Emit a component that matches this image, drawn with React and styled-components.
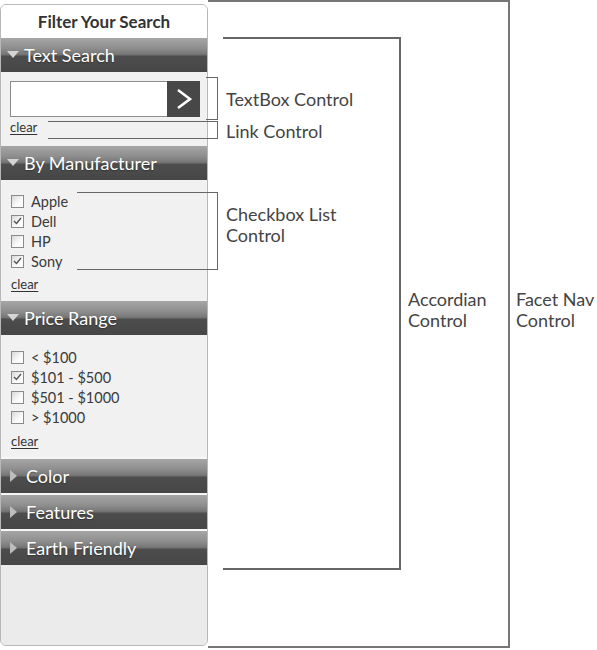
import React from "react";
import styled, { createGlobalStyle } from "styled-components";

const Global = createGlobalStyle`
  html, body { margin: 0; padding: 0; background: #fff; }
  body { font-family: Lato, "Open Sans", sans-serif; color: #3a3a3a; }
`;

const Page = styled.div`
  position: relative;
  display: flex;
  align-items: flex-start;
  width: 597px;
  height: 650px;
`;

const Panel = styled.div`
  box-sizing: border-box;
  width: 208px;
  height: 642px;
  margin-top: 4px;
  border: 1px solid #b8b8b8;
  border-radius: 6px;
  background: #ebebeb;
  overflow: hidden;
  display: flex;
  flex-direction: column;
`;

const Title = styled.div`
  height: 33px;
  background: #fff;
  display: flex;
  align-items: center;
  justify-content: center;
  font-size: 17px;
  font-weight: 700;
  color: #333;
  flex-shrink: 0;
`;

const Header = styled.div`
  height: 34px;
  flex-shrink: 0;
  border-top: ${(p) => (p.$collapsed ? "2px solid #f6f6f6" : "0")};
  display: flex;
  align-items: center;
  gap: ${(p) => (p.$collapsed ? 9 : 5)}px;
  padding-left: ${(p) => (p.$collapsed ? 9 : 6)}px;
  color: #fff;
  font-size: 18px;
  background: linear-gradient(
    to bottom,
    #a6a6a6 0%,
    #8e8e8e 30%,
    #767676 48%,
    #4d4d4d 54%,
    #464646 100%
  );
  text-shadow: 0 1px 1px rgba(0, 0, 0, 0.3);
`;

const Body = styled.div`
  background: #f1f1f1;
  padding: ${(p) => p.$pad};
  flex-shrink: 0;
`;

const SearchRow = styled.div`
  display: flex;
  width: 190px;
  height: 36px;
`;

const SearchInput = styled.div`
  flex: 1;
  background: #fff;
  border: 1px solid #8c8c8c;
  border-right: 0;
`;

const SearchButton = styled.div`
  width: 33px;
  background: #474747;
  display: flex;
  align-items: center;
  justify-content: center;
`;

const Clear = styled.a`
  display: block;
  margin-top: ${(p) => p.$mt}px;
  font-size: 13px;
  line-height: 15px;
  color: #333;
  text-decoration: underline;
  text-underline-offset: 2px;
`;

const List = styled.div`
  display: flex;
  flex-direction: column;
`;

const Item = styled.div`
  display: flex;
  align-items: center;
  height: 20px;
  gap: 7px;
  font-size: 14.5px;
  color: #3a3a3a;
`;

const Box = styled.span`
  box-sizing: border-box;
  width: 13px;
  height: 13px;
  border: 1px solid #8a8a8a;
  background: linear-gradient(135deg, #d8d8d8 0%, #fafafa 60%, #fff 100%);
  display: flex;
  align-items: center;
  justify-content: center;
`;

const Rest = styled.div`
  flex: 1;
  background: #ebebeb;
`;

const FacetBox = styled.div`
  box-sizing: border-box;
  width: 302px;
  height: 648px;
  border-top: 2px solid #767676;
  border-right: 2px solid #767676;
  border-bottom: 2px solid #767676;
  display: flex;
  align-items: flex-start;
  padding-top: 35px;
  padding-left: 15px;
`;

const Bracket = styled.div`
  box-sizing: border-box;
  width: ${(p) => p.$w}px;
  height: ${(p) => p.$h}px;
  border-top: ${(p) => p.$bw}px solid #666;
  border-right: ${(p) => p.$bw}px solid #666;
  border-bottom: ${(p) => p.$bw}px solid #666;
  flex-shrink: 0;
`;

const Label = styled.div`
  margin-top: ${(p) => p.$mt}px;
  margin-left: ${(p) => p.$ml}px;
  font-size: 18px;
  line-height: 21px;
  color: #444;
  white-space: nowrap;
`;

const Callout = styled.div`
  position: absolute;
  top: ${(p) => p.$top}px;
  left: ${(p) => p.$left}px;
  display: flex;
  align-items: flex-start;
`;

const DownArrow = () => (
  <svg width="12" height="8" viewBox="0 0 12 8">
    <polygon points="0,0 12,0 6,7" fill="#d4d4d4" />
  </svg>
);

const RightArrow = () => (
  <svg width="7" height="12" viewBox="0 0 7 12">
    <polygon points="0,0 7,6 0,12" fill="#bdbdbd" />
  </svg>
);

const Check = ({ on }) => (
  <Box>
    {on && (
      <svg width="9" height="8" viewBox="0 0 9 8">
        <polyline points="1,4 3.5,6.5 8,1" fill="none" stroke="#555" strokeWidth="1.4" />
      </svg>
    )}
  </Box>
);

const Section = ({ title, children }) => (
  <>
    <Header>
      <DownArrow />
      {title}
    </Header>
    {children}
  </>
);

const CheckList = ({ items }) => (
  <List>
    {items.map(([label, on]) => (
      <Item key={label}>
        <Check on={on} />
        {label}
      </Item>
    ))}
  </List>
);

export default function App() {
  return (
    <>
      <Global />
      <Page>
        <Panel>
          <Title>Filter Your Search</Title>
          <Section title="Text Search">
            <Body $pad="9px 8px 11px 9px">
              <SearchRow>
                <SearchInput />
                <SearchButton>
                  <svg width="16" height="22" viewBox="0 0 16 22">
                    <polyline points="2,2 14,11 2,20" fill="none" stroke="#fff" strokeWidth="2.6" />
                  </svg>
                </SearchButton>
              </SearchRow>
              <Clear $mt={3}>clear</Clear>
            </Body>
          </Section>
          <Section title="By Manufacturer">
            <Body $pad="11px 8px 9px 10px">
              <CheckList items={[["Apple", false], ["Dell", true], ["HP", false], ["Sony", true]]} />
              <Clear $mt={6}>clear</Clear>
            </Body>
          </Section>
          <Section title="Price Range">
            <Body $pad="12px 8px 8px 10px">
              <CheckList
                items={[["< $100", false], ["$101 - $500", true], ["$501 - $1000", false], ["> $1000", false]]}
              />
              <Clear $mt={7}>clear</Clear>
            </Body>
          </Section>
          {["Color", "Features", "Earth Friendly"].map((t) => (
            <Header key={t} $collapsed>
              <RightArrow />
              {t}
            </Header>
          ))}
          <Rest />
        </Panel>
        <FacetBox>
          <Bracket $w={178} $h={533} $bw={2} />
          <Label $ml={7} $mt={252}>
            Accordian
            <br />
            Control
          </Label>
        </FacetBox>
        <Label $ml={6} $mt={289}>
          Facet Nav
          <br />
          Control
        </Label>

        <Callout $top={77} $left={206}>
          <Bracket $w={12} $h={43} $bw={1.5} />
          <Label $ml={8} $mt={12}>TextBox Control</Label>
        </Callout>
        <Callout $top={121} $left={48}>
          <Bracket $w={170} $h={18} $bw={1.5} />
          <Label $ml={8} $mt={0}>Link Control</Label>
        </Callout>
        <Callout $top={192} $left={77}>
          <Bracket $w={141} $h={78} $bw={1.5} />
          <Label $ml={8} $mt={12}>
            Checkbox List
            <br />
            Control
          </Label>
        </Callout>
      </Page>
    </>
  );
}
